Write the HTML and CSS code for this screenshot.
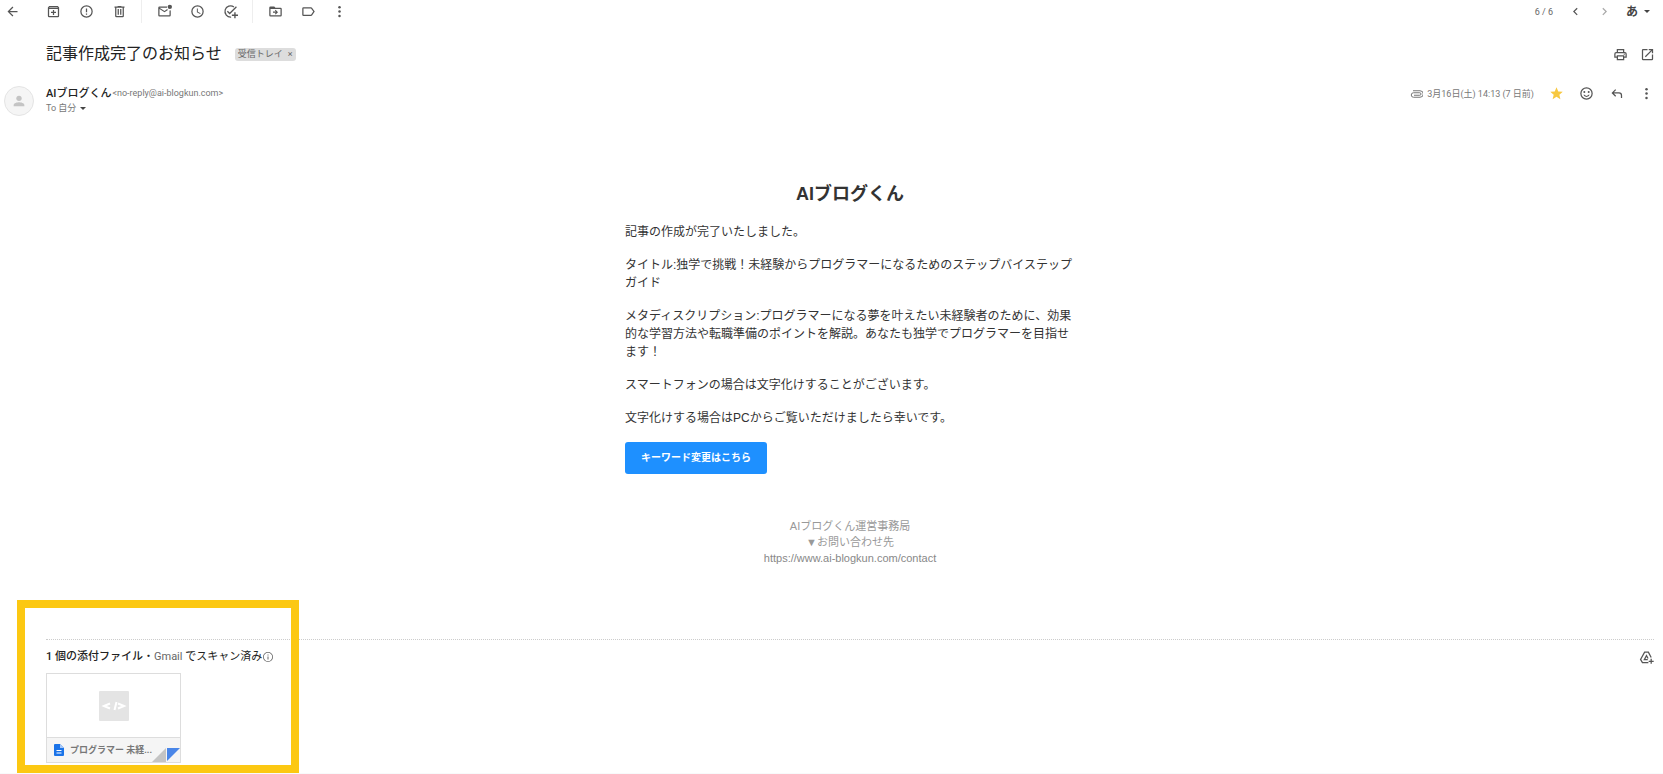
FILE: index.html
```html
<!DOCTYPE html>
<html lang="ja">
<head>
<meta charset="utf-8">
<title>記事作成完了のお知らせ</title>
<link rel="stylesheet" href="styles.css">
</head>
<body>
<main class="mail">
  <nav class="toolbar" aria-label="ツールバー">
    <button class="tool tool-back" aria-label="戻る"><svg class="icon" viewBox="0 0 24 24"><path d="M20 11H7.830l5.590-5.590L12 4l-8 8 8 8 1.410-1.410L7.830 13H20v-2z"/></svg></button>
    <div class="tool-group">
      <button class="tool" aria-label="アーカイブ"><svg class="icon" viewBox="0 0 24 24"><path d="M19 3H5L3 5.500V19a2 2 0 0 0 2 2h14a2 2 0 0 0 2-2V5.500zM5 19V8h14v11zM5 6l.8-1h12.400l.8 1zM11 9.500v3H8v2h3v3h2v-3h3v-2h-3v-3z"/></svg></button>
      <button class="tool" aria-label="迷惑メールを報告"><svg class="icon" viewBox="0 0 24 24"><path d="M12 2a10 10 0 1 0 0 20 10 10 0 0 0 0-20zm0 18a8 8 0 1 1 0-16 8 8 0 0 1 0 16zM11 7h2v6h-2zM11 15h2v2h-2z"/></svg></button>
      <button class="tool" aria-label="削除"><svg class="icon" viewBox="0 0 24 24"><path d="M15 4V3H9v1H4v2h1v13a2 2 0 0 0 2 2h10a2 2 0 0 0 2-2V6h1V4zm2 15H7V6h10zM9 8h2v9H9zm4 0h2v9h-2z"/></svg></button>
    </div>
    <div class="tool-group">
      <button class="tool" aria-label="未読にする"><svg class="icon" viewBox="0 0 24 24"><path d="M16.100 4H4a2 2 0 0 0-2 2v12a2 2 0 0 0 2 2h16a2 2 0 0 0 2-2V9.900c-.6.3-1.300.5-2 .5V18H4V8l8 5 5.500-3.400a5 5 0 0 1-1.200-1.600L12 11 4 6h12a5 5 0 0 1 .1-2z"/><circle cx="20.500" cy="4.500" r="3.500"/></svg></button>
      <button class="tool" aria-label="スヌーズ"><svg class="icon" viewBox="0 0 24 24"><path d="M12 2a10 10 0 1 0 0 20 10 10 0 0 0 0-20zm0 18a8 8 0 1 1 0-16 8 8 0 0 1 0 16zM12.500 7H11v6l5.250 3.150.75-1.230-4.500-2.670z"/></svg></button>
      <button class="tool" aria-label="ToDo リストに追加"><svg class="icon" viewBox="0 0 24 24"><path class="line" d="M17.500 4.700A9 9 0 1 0 13 20.900M7 11.500l3.700 3.700L21.500 4.500"/><path d="M18 13h2.200v3.800H24V19h-3.800v3.800H18V19h-3.800v-2.200H18z"/></svg></button>
    </div>
    <div class="tool-group">
      <button class="tool" aria-label="移動"><svg class="icon" viewBox="0 0 24 24"><path d="M20 6h-8l-2-2H4a2 2 0 0 0-2 2v12a2 2 0 0 0 2 2h16a2 2 0 0 0 2-2V8a2 2 0 0 0-2-2zm0 12H4V8h16zM12.200 9.200 11 10.400l1.600 1.600H8v2h4.600L11 15.600l1.200 1.200L16 13z"/></svg></button>
      <button class="tool" aria-label="ラベル"><svg class="icon" viewBox="0 0 24 24"><path d="M16 5H4a2 2 0 0 0-2 2v10a2 2 0 0 0 2 2h12c.7 0 1.300-.3 1.600-.8L22 12l-4.400-6.200c-.3-.5-.9-.8-1.600-.8zm0 12H4V7h12l3.600 5z"/></svg></button>
      <button class="tool tool-more" aria-label="その他"><svg class="icon" viewBox="0 0 24 24"><circle cx="12" cy="5" r="2"/><circle cx="12" cy="12" r="2"/><circle cx="12" cy="19" r="2"/></svg></button>
    </div>
    <div class="pager">
      <span class="count">6 / 6</span>
      <button class="page-btn" aria-label="新しい"><svg class="icon" viewBox="0 0 24 24"><path d="M15.400 7.400 14 6l-6 6 6 6 1.400-1.400L10.800 12z"/></svg></button>
      <button class="page-btn page-off" aria-label="古い"><svg class="icon" viewBox="0 0 24 24"><path d="M8.600 7.400 10 6l6 6-6 6-1.400-1.400L13.200 12z"/></svg></button>
      <button class="ime" aria-label="入力ツール">あ<span class="caret"></span></button>
    </div>
  </nav>

  <header class="subject-row">
    <h1 class="subject">記事作成完了のお知らせ</h1>
    <span class="chip">受信トレイ<button class="chip-x" aria-label="ラベルを削除">×</button></span>
    <div class="subject-actions">
      <button class="action" aria-label="印刷"><svg class="icon" viewBox="0 0 24 24"><path d="M19 8h-1V3H6v5H5a3 3 0 0 0-3 3v6h4v4h12v-4h4v-6a3 3 0 0 0-3-3zM8 5h8v3H8zm8 14H8v-4h8zm4-4h-2v-2H6v2H4v-4a1 1 0 0 1 1-1h14a1 1 0 0 1 1 1z"/><circle cx="18" cy="11.500" r="1"/></svg></button>
      <button class="action" aria-label="新しいウィンドウで開く"><svg class="icon" viewBox="0 0 24 24"><path d="M19 19H5V5h7V3H5a2 2 0 0 0-2 2v14a2 2 0 0 0 2 2h14a2 2 0 0 0 2-2v-7h-2zM14 3v2h3.600l-9.800 9.800 1.400 1.400L19 6.400V10h2V3z"/></svg></button>
    </div>
  </header>

  <section class="sender-row">
    <div class="avatar"><svg viewBox="0 0 24 24"><circle cx="12" cy="8" r="4"/><path d="M12 14c-2.700 0-8 1.300-8 4v2h16v-2c0-2.700-5.300-4-8-4z"/></svg></div>
    <div class="sender">
      <p class="from"><strong class="name">AIブログくん</strong><span class="address">&lt;no-reply@ai-blogkun.com&gt;</span></p>
      <p class="to">To 自分<button class="caret-btn" aria-label="詳細を表示"><span class="caret"></span></button></p>
    </div>
    <div class="meta">
      <svg class="clip" viewBox="0 0 26 16"><path d="M8 10.500h11.500a2.500 2.500 0 0 0 0-5H7a4.500 4.500 0 0 0 0 9h13a6.500 6.500 0 0 0 0-13H6"/></svg>
      <time class="date">3月16日(土) 14:13 (7 日前)</time>
      <button class="meta-btn star" aria-label="スター"><svg class="icon" viewBox="0 0 24 24"><path d="m12 17.300 6.200 3.700-1.600-7L22 9.200l-7.200-.6L12 2 9.200 8.600 2 9.200 7.500 14l-1.700 7z"/></svg></button>
      <button class="meta-btn" aria-label="リアクション"><svg class="icon" viewBox="0 0 24 24"><path d="M12 2a10 10 0 1 0 0 20 10 10 0 0 0 0-20zm0 18a8 8 0 1 1 0-16 8 8 0 0 1 0 16zM6.900 14a5.500 5.500 0 0 0 10.200 0h-2c-1.500 2.400-4.700 2.400-6.200 0z"/><circle cx="8.500" cy="9.500" r="1.600"/><circle cx="15.500" cy="9.500" r="1.600"/></svg></button>
      <button class="meta-btn" aria-label="返信"><svg class="icon" viewBox="0 0 24 24"><path d="m7.800 12 3.600 3.600L10 17l-6-6 6-6 1.400 1.400L7.800 10H16a5 5 0 0 1 5 5v4h-2v-4a3 3 0 0 0-3-3z"/></svg></button>
      <button class="meta-btn meta-last" aria-label="その他"><svg class="icon" viewBox="0 0 24 24"><circle cx="12" cy="5" r="2"/><circle cx="12" cy="12" r="2"/><circle cx="12" cy="19" r="2"/></svg></button>
    </div>
  </section>

  <article class="letter">
    <h2 class="brand">AIブログくん</h2>
    <p>記事の作成が完了いたしました。</p>
    <p>タイトル:独学で挑戦！未経験からプログラマーになるためのステップバイステップガイド</p>
    <p>メタディスクリプション:プログラマーになる夢を叶えたい未経験者のために、効果的な学習方法や転職準備のポイントを解説。あなたも独学でプログラマーを目指せます！</p>
    <p>スマートフォンの場合は文字化けすることがございます。</p>
    <p>文字化けする場合はPCからご覧いただけましたら幸いです。</p>
    <a class="cta" href="#">キーワード変更はこちら</a>
    <footer class="signature">
      <span>AIブログくん運営事務局</span>
      <span>▼お問い合わせ先</span>
      <a class="contact" href="#">https://www.ai-blogkun.com/contact</a>
    </footer>
  </article>

  <section class="attachments">
    <div class="attach-head">
      <p class="attach-title"><strong>1 個の添付ファイル</strong><span class="dot">・</span><span class="gmail">Gmail</span> でスキャン済み</p>
      <svg class="info" viewBox="0 0 24 24"><path d="M12 2a10 10 0 1 0 0 20 10 10 0 0 0 0-20zm0 18.400a8.400 8.400 0 1 1 0-16.800 8.400 8.400 0 0 1 0 16.800zM11 7h2v2h-2zM11 11h2v6h-2z"/></svg>
      <button class="action drive" aria-label="ドライブに追加"><svg class="icon" viewBox="0 0 24 24"><path class="line" d="M15 20H5.500L2.500 15 9 3.500h6L19.500 12M14 15.500H8.500L12 9l2.500 4.500M19.500 14v8M15.500 18h8"/></svg></button>
    </div>
    <a class="card" href="#">
      <span class="preview"><span class="code"><svg viewBox="0 0 30 30"><path d="m11 12.500-6 2.500 6 2.500M17.500 11l-2 8M19 12.500l6 2.500-6 2.500"/></svg></span></span>
      <span class="file">
        <svg class="doc" viewBox="0 0 10 12"><path class="doc-page" d="M1 0h5l4 4v7a1 1 0 0 1-1 1H1a1 1 0 0 1-1-1V1a1 1 0 0 1 1-1z"/><path class="doc-fold" d="M6 0v4h4z"/><path class="doc-line" d="M2.500 6.500h5M2.500 9h5"/></svg>
        <span class="file-name">プログラマー 未経...</span>
        <svg class="corner" viewBox="0 0 28 14"><path class="corner-grey" d="M0 14 14 0v14z"/><path class="corner-blue" d="M15 0h13L15 13z"/></svg>
      </span>
    </a>
    <div class="highlight"></div>
  </section>
</main>
</body>
</html>
```
FILE: styles.css
```css
* {
  box-sizing: border-box;
}

body {
  margin: 0;
  background: #f8fafb;
  color: #222;
  font-family: Roboto, "Noto Sans CJK JP", sans-serif;
  font-size: 12px;
  line-height: 18px;
}

h1,
h2,
p {
  margin: 0;
}

button {
  display: flex;
  align-items: center;
  justify-content: center;
  padding: 0;
  border: 0;
  background: none;
  color: #444;
  font: inherit;
}

a {
  color: inherit;
  text-decoration: none;
}

.mail {
  background: #fff;
}

.icon {
  width: 15px;
  height: 15px;
  fill: #555;
}

.toolbar {
  display: flex;
  align-items: center;
  height: 23px;
}

.tool {
  width: 33px;
  height: 23px;
}

.tool-back {
  width: 24px;
  margin-right: 13px;
}

.tool-more {
  width: 28px;
}

.tool-group {
  display: flex;
}

.tool-group + .tool-group {
  margin-left: 5px;
  padding-left: 6px;
  border-left: 1px solid #eee;
}

.pager {
  display: flex;
  align-items: center;
  margin-left: auto;
  padding-right: 13px;
}

.count {
  margin-right: 8px;
  color: #666;
  font-size: 9px;
}

.page-btn {
  width: 29px;
  height: 23px;
}

.page-off {
  opacity: 0.5;
}

.ime {
  gap: 6px;
  margin-left: 7px;
  font-size: 12px;
  font-weight: 700;
}

.caret {
  border: 3px solid transparent;
  border-top-color: #444;
  border-bottom: 0;
}

.subject-row {
  display: flex;
  align-items: center;
  height: 62px;
  padding: 0 8px 0 46px;
}

.subject {
  font-size: 16px;
  font-weight: 400;
  line-height: 24px;
}

.chip {
  display: flex;
  align-items: center;
  gap: 5px;
  height: 13px;
  margin-left: 13px;
  padding: 0 3px;
  border-radius: 3px;
  background: #ddd;
  color: #666;
  font-size: 9px;
  line-height: 13px;
}

.chip-x {
  color: #666;
}

.subject-actions {
  display: flex;
  gap: 12px;
  margin-left: auto;
}

.action {
  width: 15px;
  height: 15px;
}

.sender-row {
  display: flex;
  align-items: flex-start;
  padding: 1px 9px 0 4px;
}

.avatar {
  display: flex;
  align-items: center;
  justify-content: center;
  width: 30px;
  height: 30px;
  margin-right: 12px;
  border: 1px solid #e4e4e4;
  border-radius: 50%;
  background: #f5f5f5;
}

.avatar svg {
  width: 16px;
  fill: #c4c4c4;
}

.sender {
  line-height: 15px;
}

.from {
  display: flex;
  align-items: center;
}

.name {
  font-size: 11px;
  font-weight: 500;
}

.address {
  margin-left: 1px;
  color: #777;
  font-size: 9px;
}

.to {
  display: flex;
  align-items: center;
  color: #777;
  font-size: 9px;
}

.caret-btn {
  margin-left: 4px;
}

.meta {
  display: flex;
  align-items: center;
  height: 15px;
  margin-left: auto;
}

.clip {
  width: 13px;
  height: 8px;
  margin-right: 4px;
  fill: none;
  stroke: #777;
  stroke-width: 2;
}

.date {
  margin-right: 7px;
  color: #777;
  font-size: 9px;
}

.meta-btn {
  width: 30px;
  height: 15px;
}

.meta-last {
  width: 15px;
  margin-left: 8px;
}

.star .icon {
  fill: #f7c840;
}

.letter {
  box-sizing: content-box;
  max-width: 450px;
  margin: 0 auto;
  padding: 66px 0 73px 37px;
  color: #333;
  font-family: "Liberation Sans", "Noto Sans CJK JP", sans-serif;
}

.letter p {
  margin-bottom: 15px;
}

.brand {
  margin-bottom: 17px;
  font-size: 18px;
  line-height: 24px;
  text-align: center;
}

.cta {
  display: inline-block;
  padding: 7px 16px;
  border-radius: 3px;
  background: #1e90ff;
  color: #fff;
  font-size: 10px;
  font-weight: 700;
}

.signature {
  display: flex;
  flex-direction: column;
  align-items: center;
  margin-top: 44px;
  color: #999;
  font-size: 11px;
  line-height: 16px;
}

.contact {
  color: #888;
}

.attachments {
  position: relative;
  margin: 0 9px 0 46px;
  padding: 8px 0 10px;
  border-top: 1px dotted #ccc;
}

.attach-head {
  display: flex;
  align-items: center;
  margin-bottom: 7px;
}

.attach-title {
  font-size: 11px;
}

.attach-title strong {
  font-weight: 500;
}

.gmail {
  color: #666;
}

.info {
  width: 12px;
  height: 12px;
  fill: #666;
}

.drive {
  margin-left: auto;
}

.line,
.icon .line {
  fill: none;
  stroke: #555;
  stroke-width: 2;
}

.card {
  display: block;
  width: 135px;
  border: 1px solid #ddd;
}

.preview {
  display: flex;
  align-items: center;
  justify-content: center;
  height: 63px;
}

.code {
  display: flex;
  width: 30px;
  height: 30px;
  border-radius: 1px;
  background: #e4e4e4;
}

.code svg {
  fill: none;
  stroke: #fff;
  stroke-width: 2;
}

.file {
  display: flex;
  align-items: center;
  height: 25px;
  padding-left: 7px;
  border-top: 1px solid #ddd;
  background: #f5f5f5;
  color: #777;
}

.doc {
  flex: none;
  width: 10px;
  height: 12px;
}

.doc-page {
  fill: #1a73e8;
}

.doc-fold {
  fill: #a9c9f8;
}

.doc-line {
  stroke: #fff;
}

.file-name {
  flex: 1;
  min-width: 0;
  margin-left: 6px;
  font-size: 9px;
  font-weight: 700;
  white-space: nowrap;
}

.corner {
  flex: none;
  align-self: flex-end;
  width: 28px;
  height: 14px;
}

.corner-grey {
  fill: #c4c4c4;
}

.corner-blue {
  fill: #4a86e8;
}

.highlight {
  position: absolute;
  top: -40px;
  bottom: 0;
  left: -29px;
  width: 282px;
  border: 8px solid #fcc812;
  pointer-events: none;
}
```
